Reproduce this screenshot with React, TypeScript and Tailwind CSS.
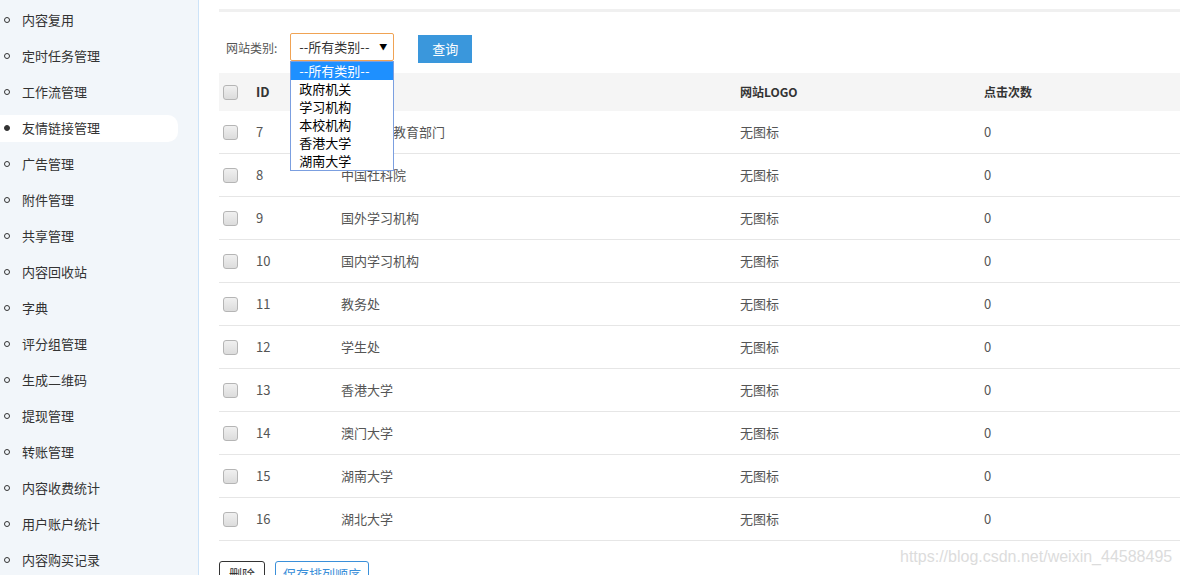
const menu = [
  "内容复用",
  "定时任务管理",
  "工作流管理",
  "友情链接管理",
  "广告管理",
  "附件管理",
  "共享管理",
  "内容回收站",
  "字典",
  "评分组管理",
  "生成二维码",
  "提现管理",
  "转账管理",
  "内容收费统计",
  "用户账户统计",
  "内容购买记录",
];

const rows = [
  { id: 7, name: "各级政府教育部门" },
  { id: 8, name: "中国社科院" },
  { id: 9, name: "国外学习机构" },
  { id: 10, name: "国内学习机构" },
  { id: 11, name: "教务处" },
  { id: 12, name: "学生处" },
  { id: 13, name: "香港大学" },
  { id: 14, name: "澳门大学" },
  { id: 15, name: "湖南大学" },
  { id: 16, name: "湖北大学" },
];

const options = ["--所有类别--", "政府机关", "学习机构", "本校机构", "香港大学", "湖南大学"];

const font = { fontFamily: '"Noto Sans CJK SC", "Liberation Sans", sans-serif' };

function Check() {
  return (
    <span className="block w-[15px] h-[15px] rounded-[3px] border border-[#b5b5b5] bg-gradient-to-b from-[#f0f0f0] to-[#dcdcdc]" />
  );
}

export default function App() {
  return (
    <div
      className="relative flex h-[575px] w-[1180px] overflow-hidden bg-white text-[13px] text-[#555]"
      style={font}
    >
      {/* sidebar */}
      <aside className="w-[199px] shrink-0 border-r border-[#cde3f8] bg-[#f2f6fa] pt-[2px]">
        {menu.map((m) => {
          const active = m === "友情链接管理";
          return (
            <div key={m} className="h-9 flex items-center">
              <div
                className={`flex items-center h-[27px] w-[178px] rounded-r-[10px] ${
                  active ? "bg-white" : ""
                }`}
              >
                <span
                  className={`ml-[4px] w-[6px] h-[6px] rounded-full border border-[#333] ${
                    active ? "bg-[#333]" : ""
                  }`}
                />
                <span className="ml-[12px] text-[13px] text-[#333]">{m}</span>
              </div>
            </div>
          );
        })}
      </aside>

      {/* main */}
      <main className="flex-1 pl-[20px] pt-[9px]">
        <div className="h-[3px] bg-[#f0f0f0]" />

        <div className="flex items-start h-[61px] pt-[21px]">
          <span className="ml-[7px] mt-[6px] text-[12px] text-[#555]">网站类别:</span>
          <div className="relative ml-[13px]">
            <div className="flex items-center justify-between w-[104px] h-[28px] border border-[#f0a354] rounded-[2px] pl-[8px] pr-[6px] text-[13px] text-[#333]">
              <span>--所有类别--</span>
              <span className="text-[8px] text-black">▼</span>
            </div>
            <div className="absolute left-0 top-[28px] z-10 w-[104px] border border-[#7b9fe0] bg-white text-[13px] text-black">
              {options.map((o, i) => (
                <div
                  key={o}
                  className={`h-[18px] leading-[18px] px-[8px] ${
                    i === 0 ? "bg-[#1e90ff] text-white" : ""
                  }`}
                >
                  {o}
                </div>
              ))}
            </div>
          </div>
          <button className="ml-[24px] mt-[2px] w-[54px] h-[28px] bg-[#3a97dc] text-white text-[13px]">
            查询
          </button>
        </div>

        <div className="h-[38px] flex items-center bg-[#f5f5f5] font-bold text-[#333] text-[12px]">
          <div className="w-[37px] pl-[4px]">
            <Check />
          </div>
          <div className="w-[85px] text-[13px]">ID</div>
          <div className="w-[399px]">网站名称</div>
          <div className="w-[244px]">网站LOGO</div>
          <div>点击次数</div>
        </div>

        {rows.map((r) => (
          <div
            key={r.id}
            className="h-[43px] flex items-center border-b border-[#e6e6e6] text-[13px]"
          >
            <div className="w-[37px] pl-[4px]">
              <Check />
            </div>
            <div className="w-[85px]">{r.id}</div>
            <div className="w-[399px]">{r.name}</div>
            <div className="w-[244px]">无图标</div>
            <div>0</div>
          </div>
        ))}

        <div className="flex gap-[10px] mt-[20px]">
          <button className="w-[46px] h-[26px] border border-[#333] rounded-[3px] text-[13px] text-[#333]">
            删除
          </button>
          <button className="w-[94px] h-[26px] border border-[#3a8fd9] rounded-[3px] text-[13px] text-[#3a8fd9]">
            保存排列顺序
          </button>
        </div>
      </main>

      <div
        className="absolute left-[900px] top-[545px] text-[16px] text-[#dcdcdc]"
        style={{ fontFamily: '"Liberation Sans", sans-serif' }}
      >
        https://blog.csdn.net/weixin_44588495
      </div>
    </div>
  );
}
